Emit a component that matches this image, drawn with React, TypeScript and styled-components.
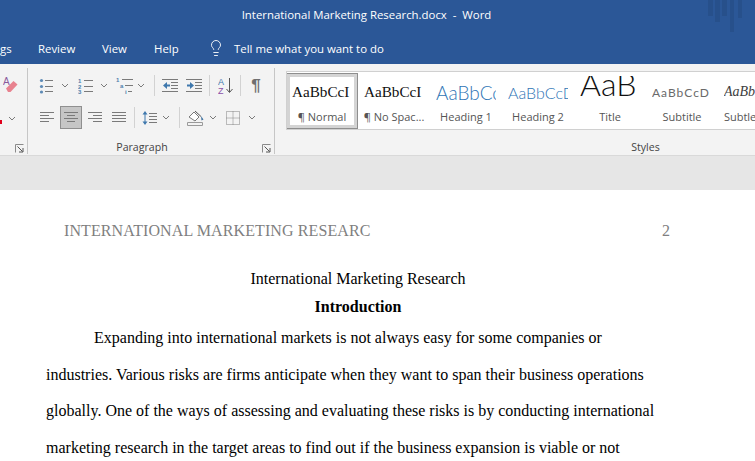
import React from 'react';
import styled, { createGlobalStyle } from 'styled-components';
import { Lightbulb } from 'lucide-react';

const GlobalStyle = createGlobalStyle`
  html, body {
    margin: 0;
    padding: 0;
    background: #fff;
  }
  body {
    width: 755px;
    height: 461px;
    overflow: hidden;
  }
`;

const UI_FONT = `"Open Sans", "Noto Sans", sans-serif`;
const DOC_FONT = `"Liberation Serif", "Times New Roman", serif`;

const Chevron = () => (
  <svg width="8" height="5" viewBox="0 0 8 5" fill="none">
    <path d="M1 1l3 3 3-3" stroke="#7a7a7a" strokeWidth="1" />
  </svg>
);

const Launcher = () => (
  <svg width="9" height="9" viewBox="0 0 9 9" fill="none">
    <path d="M.5 8.5v-8h8" stroke="#8a8a8a" />
    <path d="M2.5 2.5l5 5M8 4v4H4" stroke="#555" />
  </svg>
);

const Lines = ({ rows }: { rows: [number, number, number][] }) => (
  <>
    {rows.map(([x1, x2, y], i) => (
      <path key={i} d={`M${x1} ${y}.5H${x2}`} stroke="#7a7a7a" />
    ))}
  </>
);

const BulletsIcon = () => (
  <svg width="16" height="16" viewBox="0 0 16 16">
    <circle cx="2.5" cy="2.5" r="1.6" fill="#5d8ab5" />
    <circle cx="2.5" cy="8.5" r="1.6" fill="#5d8ab5" />
    <circle cx="2.5" cy="14" r="1.6" fill="#5d8ab5" />
    <Lines rows={[[6, 14, 2], [6, 14, 8], [6, 14, 13]]} />
  </svg>
);

const NumberingIcon = () => (
  <svg width="16" height="16" viewBox="0 0 16 16">
    <text x="0" y="5" fontSize="6" fontWeight="700" fill="#4f7fac" fontFamily="Liberation Sans">1</text>
    <text x="0" y="10.5" fontSize="6" fontWeight="700" fill="#4f7fac" fontFamily="Liberation Sans">2</text>
    <text x="0" y="16" fontSize="6" fontWeight="700" fill="#4f7fac" fontFamily="Liberation Sans">3</text>
    <Lines rows={[[6, 15, 2], [6, 15, 8], [6, 15, 13]]} />
  </svg>
);

const MultilevelIcon = () => (
  <svg width="18" height="17" viewBox="0 0 18 17">
    <text x="0" y="5" fontSize="6" fontWeight="700" fill="#4f7fac" fontFamily="Liberation Sans">1</text>
    <text x="4" y="11" fontSize="6" fontWeight="700" fill="#4f7fac" fontFamily="Liberation Sans">a</text>
    <text x="9" y="16.5" fontSize="6" fontWeight="700" fill="#4f7fac" fontFamily="Liberation Sans">i</text>
    <Lines rows={[[6, 17, 2], [9, 17, 8], [12, 16, 14]]} />
  </svg>
);

const IndentIcon = ({ out }: { out?: boolean }) => (
  <svg width="17" height="14" viewBox="0 0 17 14">
    <Lines rows={[[0, 16, 0], [9, 16, 3], [9, 16, 6], [9, 16, 9], [0, 16, 12]]} />
    {out ? (
      <path d="M1 6.5L5 3v2.4h3v2.2H5V10z" fill="#3f78ad" />
    ) : (
      <path d="M8 6.5L4 3v2.4H1v2.2h3V10z" fill="#3f78ad" />
    )}
  </svg>
);

const SortIcon = () => (
  <svg width="16" height="17" viewBox="0 0 16 17">
    <text x="0" y="7.5" fontSize="9" fill="#3f78ad" fontFamily="Liberation Sans">A</text>
    <text x="0" y="16.5" fontSize="9" fill="#8a4fa8" fontFamily="Liberation Sans">Z</text>
    <path d="M11.5 1v14M8.5 12l3 3.5 3-3.5" stroke="#555" fill="none" />
  </svg>
);

type AlignKind = 'left' | 'center' | 'right' | 'justify';

const AlignIcon = ({ kind }: { kind: AlignKind }) => {
  const rows: Record<AlignKind, [number, number, number][]> = {
    left: [[0, 14, 0], [0, 9, 3], [0, 14, 6], [0, 9, 9]],
    center: [[0, 14, 0], [3, 11, 3], [0, 14, 6], [3, 11, 9]],
    right: [[0, 14, 0], [5, 14, 3], [0, 14, 6], [5, 14, 9]],
    justify: [[0, 14, 0], [0, 14, 3], [0, 14, 6], [0, 14, 9]],
  };
  return (
    <svg width="14" height="11" viewBox="0 0 14 11">
      <Lines rows={rows[kind]} />
    </svg>
  );
};

const SpacingIcon = () => (
  <svg width="16" height="16" viewBox="0 0 16 16">
    <path d="M3 1L.5 4.5h5zM3 15L.5 11.5h5z" fill="#3f78ad" />
    <path d="M3 4v8" stroke="#3f78ad" />
    <Lines rows={[[7, 15, 3], [7, 15, 6], [7, 15, 9], [7, 15, 12]]} />
  </svg>
);

const ShadingIcon = () => (
  <svg width="18" height="16" viewBox="0 0 18 16" fill="none">
    <path d="M2 7l5-5 5 5-4 4z" stroke="#7a7a7a" fill="#fff" />
    <path d="M8 1l6 5.5" stroke="#555" />
    <path d="M14 6l2.5 3.5-2 1z" fill="#3b6f9f" />
    <path d="M.5 12.5h15v3H.5z" stroke="#9a9a9a" fill="#f3f3f3" />
  </svg>
);

const BordersIcon = () => (
  <svg width="14" height="14" viewBox="0 0 14 14" fill="none">
    <path
      d="M.5.5h13v13H.5zM7 .5v13M.5 7h13"
      stroke="#808080"
      strokeDasharray="1 1"
    />
  </svg>
);

const EraserIcon = () => (
  <svg width="15" height="17" viewBox="0 0 15 17">
    <text x="0" y="9" fontSize="10" fill="#8a5a9c" fontFamily="Liberation Sans">A</text>
    <path d="M3 12.5L10.5 5l4 3.5L7.5 16H5z" fill="#e8828f" />
  </svg>
);

const App = () => {
  return (
    <>
      <GlobalStyle />
      <Shell>
        <TitleBar>
          International Marketing Research.docx&nbsp; -&nbsp; Word
          <TitleDecor width="36" height="32" viewBox="0 0 36 32">
            <rect x="0" width="5" height="16" />
            <rect x="7" width="5" height="22" />
            <rect x="14" width="5" height="16" />
            <rect x="22" width="4" height="32" />
            <rect x="30" width="4" height="18" />
          </TitleDecor>
        </TitleBar>
        <TabBar>
          <Tab $w={38}>gs</Tab>
          <Tab $w={64}>Review</Tab>
          <Tab $w={52}>View</Tab>
          <Tab $w={53}>Help</Tab>
          <BulbSlot>
            <Lightbulb size={18} strokeWidth={1.2} color="#fff" />
          </BulbSlot>
          <Tab $w={170}>Tell me what you want to do</Tab>
        </TabBar>
        <Ribbon>
          <ClippedGroup>
            <ClippedTop>
              <EraserIcon />
            </ClippedTop>
            <ClippedBottom>
              <RedMark />
              <Chevron />
            </ClippedBottom>
            <GroupFooter>
              <LauncherSlot>
                <Launcher />
              </LauncherSlot>
            </GroupFooter>
          </ClippedGroup>
          <ParagraphGroup>
            <ToolRows>
              <ToolRow>
                <Tool $w={22}><BulletsIcon /></Tool>
                <Tool $w={14}><Chevron /></Tool>
                <Tool $w={22} $ml={3}><NumberingIcon /></Tool>
                <Tool $w={14}><Chevron /></Tool>
                <Tool $w={22} $ml={3}><MultilevelIcon /></Tool>
                <Tool $w={10}><Chevron /></Tool>
                <Separator $ml={8} />
                <Tool $w={22} $ml={4}><IndentIcon out /></Tool>
                <Tool $w={22} $ml={2}><IndentIcon /></Tool>
                <Separator $ml={4} />
                <Tool $w={22} $ml={5}><SortIcon /></Tool>
                <Separator $ml={3} />
                <Tool $w={22} $ml={4}><Pilcrow>¶</Pilcrow></Tool>
              </ToolRow>
              <ToolRow>
                <Tool $w={22}><AlignIcon kind="left" /></Tool>
                <Tool $w={22} $ml={2} $active><AlignIcon kind="center" /></Tool>
                <Tool $w={22} $ml={2}><AlignIcon kind="right" /></Tool>
                <Tool $w={22} $ml={2}><AlignIcon kind="justify" /></Tool>
                <Separator $ml={4} />
                <Tool $w={22} $ml={4}><SpacingIcon /></Tool>
                <Tool $w={10}><Chevron /></Tool>
                <Separator $ml={8} />
                <Tool $w={22} $ml={5}><ShadingIcon /></Tool>
                <Tool $w={12}><Chevron /></Tool>
                <Tool $w={22} $ml={3}><BordersIcon /></Tool>
                <Tool $w={12} $ml={2}><Chevron /></Tool>
              </ToolRow>
            </ToolRows>
            <GroupFooter>
              <GroupLabel>Paragraph</GroupLabel>
              <LauncherSlot>
                <Launcher />
              </LauncherSlot>
            </GroupFooter>
          </ParagraphGroup>
          <StylesGroup>
            <Gallery>
              <StyleItem $selected>
                <Preview><NormalSample>AaBbCcI</NormalSample></Preview>
                <StyleName>¶ Normal</StyleName>
              </StyleItem>
              <StyleItem>
                <Preview><NormalSample>AaBbCcI</NormalSample></Preview>
                <StyleName>¶ No Spac...</StyleName>
              </StyleItem>
              <StyleItem>
                <Preview><Heading1Sample>AaBbCcD</Heading1Sample></Preview>
                <StyleName>Heading 1</StyleName>
              </StyleItem>
              <StyleItem>
                <Preview><Heading2Sample>AaBbCcD</Heading2Sample></Preview>
                <StyleName>Heading 2</StyleName>
              </StyleItem>
              <StyleItem>
                <Preview><TitleSample>AaB</TitleSample></Preview>
                <StyleName>Title</StyleName>
              </StyleItem>
              <StyleItem>
                <Preview><SubtitleSample>AaBbCcD</SubtitleSample></Preview>
                <StyleName>Subtitle</StyleName>
              </StyleItem>
              <StyleItem>
                <Preview><SubtleSample>AaBbCcD</SubtleSample></Preview>
                <StyleName>Subtle Em...</StyleName>
              </StyleItem>
            </Gallery>
            <StylesFooter>Styles</StylesFooter>
          </StylesGroup>
        </Ribbon>
        <RulerBand />
        <Page>
          <PageHeader>
            <span>INTERNATIONAL MARKETING RESEARC</span>
            <span>2</span>
          </PageHeader>
          <DocTitle>International Marketing Research</DocTitle>
          <DocHeading>Introduction</DocHeading>
          <BodyText>
            Expanding into international markets is not always easy for some companies or
            industries. Various risks are firms anticipate when they want to span their business
            operations globally. One of the ways of assessing and evaluating these risks is by
            conducting international marketing research in the target areas to find out if the
            business expansion is viable or not
          </BodyText>
        </Page>
      </Shell>
    </>
  );
};

const Shell = styled.div`
  width: 755px;
  height: 461px;
  overflow: hidden;
  display: flex;
  flex-direction: column;
  font-family: ${UI_FONT};
`;

const TitleBar = styled.div`
  position: relative;
  flex: 0 0 32px;
  height: 32px;
  padding: 0 22px 4px 0;
  box-sizing: border-box;
  display: flex;
  align-items: center;
  justify-content: center;
  background: #2b5797;
  color: #fff;
  font-size: 11.4px;
  white-space: nowrap;
`;

const TitleDecor = styled.svg`
  position: absolute;
  top: 0;
  left: 708px;
  fill: #27508b;
`;

const TabBar = styled.div`
  flex: 0 0 32px;
  display: flex;
  align-items: center;
  background: #2b5797;
  color: #fff;
  font-size: 11.4px;
`;

const Tab = styled.div<{ $w: number }>`
  flex: 0 0 ${p => p.$w}px;
  white-space: nowrap;
`;

const BulbSlot = styled.div`
  flex: 0 0 27px;
  display: flex;
`;

const Ribbon = styled.div`
  flex: 0 0 92px;
  box-sizing: border-box;
  display: flex;
  overflow: hidden;
  background: #f3f3f3;
  border-bottom: 1px solid #d9d9d9;
`;

const ClippedGroup = styled.div`
  flex: 0 0 28px;
  box-sizing: border-box;
  margin: 4px 0 1px;
  border-right: 1px solid #c6c6c6;
  display: flex;
  flex-direction: column;
`;

const ClippedTop = styled.div`
  height: 32px;
  padding: 8px 0 0 3px;
  box-sizing: border-box;
`;

const ClippedBottom = styled.div`
  height: 32px;
  display: flex;
  align-items: center;
  justify-content: space-between;
  padding: 4px 11px 0 0;
  box-sizing: border-box;
`;

const RedMark = styled.div`
  width: 2px;
  height: 4px;
  margin-top: 8px;
  background: #e0001b;
`;

const ParagraphGroup = styled.div`
  flex: 0 0 247px;
  box-sizing: border-box;
  margin: 4px 0 1px;
  border-right: 1px solid #c6c6c6;
  display: flex;
  flex-direction: column;
`;

const ToolRows = styled.div`
  padding: 6px 0 0 8px;
  display: flex;
  flex-direction: column;
  gap: 9px;
  height: 64px;
  box-sizing: border-box;
`;

const ToolRow = styled.div`
  display: flex;
  align-items: stretch;
  height: 23px;
`;

const Tool = styled.div<{ $w: number; $ml?: number; $active?: boolean }>`
  flex: 0 0 ${p => p.$w}px;
  margin-left: ${p => p.$ml ?? 0}px;
  display: flex;
  align-items: center;
  justify-content: center;
  box-sizing: border-box;
  border: 1px solid ${p => (p.$active ? '#8f8f8f' : 'transparent')};
  background: ${p => (p.$active ? '#c6c6c6' : 'transparent')};
`;

const Separator = styled.div<{ $ml: number }>`
  flex: 0 0 1px;
  margin: 1px 0 1px ${p => p.$ml}px;
  background: #d2d2d2;
`;

const Pilcrow = styled.span`
  font: 700 17px "Liberation Sans", sans-serif;
  color: #6f6f6f;
`;

const GroupFooter = styled.div`
  position: relative;
  flex: 1;
  display: flex;
  align-items: center;
  justify-content: center;
  padding: 10px 18px 0 0;
`;

const GroupLabel = styled.div`
  font-size: 10.6px;
  color: #444;
`;

const LauncherSlot = styled.div`
  position: absolute;
  right: 3px;
  bottom: 1px;
  display: flex;
`;

const StylesGroup = styled.div`
  flex: 0 0 730px;
  box-sizing: border-box;
  padding: 7px 0 0 11px;
  display: flex;
  flex-direction: column;
`;

const Gallery = styled.div`
  display: flex;
  height: 59px;
  box-sizing: border-box;
  padding-top: 1px;
  background: #fff;
  border: 1px solid #d0d0d0;
  border-right: none;
  overflow: hidden;
`;

const StyleItem = styled.div<{ $selected?: boolean }>`
  flex: 0 0 72px;
  height: 56px;
  box-sizing: border-box;
  margin-left: ${p => (p.$selected ? '-1px' : '0')};
  border: 1px solid ${p => (p.$selected ? '#8e8e8e' : 'transparent')};
  box-shadow: ${p => (p.$selected ? 'inset 0 0 0 3px #d4d4d4' : 'none')};
  display: flex;
  flex-direction: column;
  align-items: center;
  padding: 2px 4px 0;
`;

const Preview = styled.div`
  height: 32px;
  width: 60px;
  flex: none;
  margin-bottom: 1px;
  overflow: hidden;
  white-space: nowrap;
  display: flex;
  align-items: center;
  justify-content: flex-start;
`;

const StyleName = styled.div`
  font-size: 11px;
  line-height: 16px;
  color: #555;
  white-space: nowrap;
`;

const NormalSample = styled.span`
  font: 15.2px "Liberation Serif", serif;
  color: #111;
`;

const Heading1Sample = styled.span`
  font: 300 19px Lato, sans-serif;
  color: #2e74b5;
`;

const Heading2Sample = styled.span`
  font: 300 16px Lato, sans-serif;
  color: #2e74b5;
`;

const TitleSample = styled.span`
  font: 300 32px/32px Lato, sans-serif;
  color: #111;
  margin-bottom: 16px;
`;

const SubtitleSample = styled.span`
  font: 12px Lato, sans-serif;
  color: #6a6a6a;
  letter-spacing: 1px;
`;

const SubtleSample = styled.span`
  font: italic 14px "Liberation Serif", serif;
  color: #404040;
`;

const StylesFooter = styled.div`
  flex: 1;
  display: flex;
  align-items: center;
  justify-content: center;
  padding-top: 8px;
  font-size: 10.6px;
  color: #444;
`;

const RulerBand = styled.div`
  flex: 0 0 34px;
  background: #e6e6e6;
`;

const Page = styled.div`
  flex: 1;
  padding: 29px 0 0 46px;
  background: #fff;
  font-family: ${DOC_FONT};
  font-size: 16px;
  color: #000;
`;

const PageHeader = styled.div`
  width: 624px;
  padding-left: 18px;
  box-sizing: border-box;
  display: flex;
  justify-content: space-between;
  color: #7f7f7f;
  letter-spacing: 0.1px;
  line-height: 24px;
  margin-bottom: 21px;
`;

const DocTitle = styled.div`
  width: 624px;
  text-align: center;
  line-height: 30px;
`;

const DocHeading = styled(DocTitle)`
  font-weight: 700;
  line-height: 26px;
`;

const BodyText = styled.p`
  width: 624px;
  margin: 0;
  text-indent: 48px;
  line-height: 36.7px;
`;

export default App;
